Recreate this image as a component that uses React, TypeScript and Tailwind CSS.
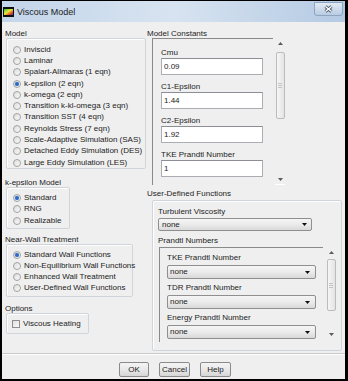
import type { ReactNode } from "react";

const modelOptions = [
  "Inviscid",
  "Laminar",
  "Spalart-Allmaras (1 eqn)",
  "k-epsilon (2 eqn)",
  "k-omega (2 eqn)",
  "Transition k-kl-omega (3 eqn)",
  "Transition SST (4 eqn)",
  "Reynolds Stress (7 eqn)",
  "Scale-Adaptive Simulation (SAS)",
  "Detached Eddy Simulation (DES)",
  "Large Eddy Simulation (LES)",
];

const kEpsOptions = ["Standard", "RNG", "Realizable"];

const wallOptions = [
  "Standard Wall Functions",
  "Non-Equilibrium Wall Functions",
  "Enhanced Wall Treatment",
  "User-Defined Wall Functions",
];

const constants = [
  { label: "Cmu", value: "0.09" },
  { label: "C1-Epsilon", value: "1.44" },
  { label: "C2-Epsilon", value: "1.92" },
  { label: "TKE Prandtl Number", value: "1" },
];

const prandtl = ["TKE Prandtl Number", "TDR Prandtl Number", "Energy Prandtl Number"];

function Radio({ label, checked, rowClass }: { label: string; checked?: boolean; rowClass: string }) {
  return (
    <div className={`flex items-center ${rowClass}`}>
      <span className="ml-[6px] flex h-[8px] w-[8px] shrink-0 items-center justify-center rounded-full border border-[#a3a3a3] bg-gradient-to-br from-[#dcdcdc] to-[#fbfbfb]">
        {checked ? <span className="h-[4px] w-[4px] rounded-full bg-[#2c6cc4] shadow-[0_0_1px_#7fb0ea]" /> : null}
      </span>
      <span className="ml-[3px] whitespace-nowrap leading-none">{label}</span>
    </div>
  );
}

function GroupBox({ className, children }: { className: string; children: ReactNode }) {
  return (
    <div className={`rounded-[2px] border border-[#cfd5da] shadow-[inset_1px_1px_0_#ffffff] ${className}`}>
      {children}
    </div>
  );
}

function ScrollBar({ thumbClass }: { thumbClass: string }) {
  return (
    <div className="flex w-[10px] flex-col items-center">
      <div className="flex h-[11px] w-full items-center justify-center">
        <svg width="5" height="3" viewBox="0 0 5 3">
          <path d="M0 3L2.5 0L5 3z" fill="#5a5a5a" />
        </svg>
      </div>
      <div
        className={`flex w-[9px] flex-col items-center justify-center gap-[1px] rounded-[2px] border border-[#bcbcbc] bg-gradient-to-r from-[#f6f6f6] to-[#e4e4e4] ${thumbClass}`}
      >
        <span className="h-px w-[4px] bg-[#c4c4c4]" />
        <span className="h-px w-[4px] bg-[#c4c4c4]" />
        <span className="h-px w-[4px] bg-[#c4c4c4]" />
      </div>
      <div className="flex-1" />
      <div className="flex h-[10px] w-full items-center justify-center">
        <svg width="5" height="3" viewBox="0 0 5 3">
          <path d="M0 0L5 0L2.5 3z" fill="#5a5a5a" />
        </svg>
      </div>
    </div>
  );
}

function Combo({ className }: { className: string }) {
  return (
    <div
      className={`flex items-center justify-between rounded-[2px] border border-[#8f8f8f] bg-gradient-to-b from-[#f5f5f5] via-[#ebebeb] to-[#d9d9d9] ${className}`}
    >
      <span className="leading-none">none</span>
      <svg width="5" height="3" viewBox="0 0 5 3">
        <path d="M0 0L5 0L2.5 3z" fill="#111111" />
      </svg>
    </div>
  );
}

function Button({ label, width }: { label: string; width: string }) {
  return (
    <div
      className={`flex h-[15px] items-center justify-center rounded-[2px] border border-[#8a8a8a] bg-gradient-to-b from-[#f4f4f4] via-[#e9e9e9] to-[#d6d6d6] leading-none ${width}`}
    >
      {label}
    </div>
  );
}

export default function App() {
  return (
    <div className="h-[381px] w-[348px] overflow-hidden bg-black pb-[2px] pl-[2px] pr-[3px] pt-[1px] font-['Liberation_Sans',Arial,sans-serif] text-[8px] text-[#1c1c1c]">
      <div className="flex h-full flex-col bg-[#efefef]">
        {/* title bar */}
        <div className="flex h-[21px] items-start justify-between bg-gradient-to-r from-[#c3d5ea] via-[#d7e3f0] to-[#b4cae3]">
          <div className="flex h-full items-center">
            <svg width="11" height="10" viewBox="0 0 11 10" className="ml-[1px] mt-[1px]">
              <defs>
                <linearGradient id="ico" x1="0" y1="0" x2="1" y2="1">
                  <stop offset="0" stopColor="#2fbf3a" />
                  <stop offset="0.45" stopColor="#e8e83a" />
                  <stop offset="0.75" stopColor="#e84a22" />
                  <stop offset="1" stopColor="#2b3fbf" />
                </linearGradient>
              </defs>
              <rect x="0" y="0" width="11" height="10" fill="#101010" />
              <rect x="1" y="2" width="9" height="6" fill="url(#ico)" />
            </svg>
            <span className="ml-[3px] mt-[1px] text-[9px] leading-none text-[#1a1a1a]">Viscous Model</span>
          </div>
          <div className="mr-[2px] mt-[1px] flex h-[14px] w-[29px] items-center justify-center rounded-b-[3px] border border-[#8ea4bf] bg-gradient-to-b from-[#e2ebf5] to-[#b8cce2]">
            <svg width="9" height="8" viewBox="0 0 9 8">
              <path d="M1.5 1.5L7.5 6.5M7.5 1.5L1.5 6.5" stroke="#4a5566" strokeWidth="3" />
              <path d="M1.5 1.5L7.5 6.5M7.5 1.5L1.5 6.5" stroke="#ffffff" strokeWidth="1.4" />
            </svg>
          </div>
        </div>

        {/* body */}
        <div className="flex h-[331px]">
          {/* left column */}
          <div className="w-[145px] pl-[3px] pt-[8px]">
            <div className="leading-[8px]">Model</div>
            <GroupBox className="ml-[1px] w-[140px] pt-[5px]">
              {modelOptions.map((m) => (
                <Radio key={m} label={m} checked={m === "k-epsilon (2 eqn)"} rowClass="h-[11.3px]" />
              ))}
            </GroupBox>

            <div className="mt-[10px] leading-[8px]">k-epsilon Model</div>
            <GroupBox className="ml-[1px] w-[64px] pb-[2px] pt-[4px]">
              {kEpsOptions.map((m) => (
                <Radio key={m} label={m} checked={m === "Standard"} rowClass="h-[11.3px]" />
              ))}
            </GroupBox>

            <div className="mt-[7px] leading-[8px]">Near-Wall Treatment</div>
            <GroupBox className="ml-[1px] w-[127px] pb-[3px] pt-[4px]">
              {wallOptions.map((m) => (
                <Radio key={m} label={m} checked={m === "Standard Wall Functions"} rowClass="h-[11px]" />
              ))}
            </GroupBox>

            <div className="mt-[8px] leading-[8px]">Options</div>
            <GroupBox className="ml-[1px] w-[83px] py-[4.5px]">
              <div className="flex h-[10px] items-center">
                <span className="ml-[5px] h-[8px] w-[8px] border border-[#8f8f8f] bg-gradient-to-br from-[#dedede] to-[#fbfbfb]" />
                <span className="ml-[3px] leading-none">Viscous Heating</span>
              </div>
            </GroupBox>
          </div>

          {/* right column */}
          <div className="flex-1 pt-[8px]">
            <div className="leading-[8px]">Model Constants</div>
            <div className="ml-[5px] flex h-[147px] w-[136px]">
              <div className="w-[121px] overflow-hidden border-l border-t border-[#8a8a8a] pl-[8px] pt-[9px]">
                {constants.map((c) => (
                  <div key={c.label} className="mb-[7px]">
                    <div className="leading-[10px]">{c.label}</div>
                    <div className="flex h-[17px] w-[102px] items-center border border-[#abadb3] border-t-[#8b8e94] bg-white pl-[2px] leading-none">
                      {c.value}
                    </div>
                  </div>
                ))}
              </div>
              <div className="ml-[2px] flex border-b border-[#ffffff]">
                <ScrollBar thumbClass="mt-[3px] h-[67px]" />
              </div>
            </div>

            <div className="mt-[4px] leading-[10px]">User-Defined Functions</div>
            <GroupBox className="ml-[5px] mt-[1px] h-[151px] w-[190px] pt-[6px]">
              <div className="pl-[5px] leading-[10px]">Turbulent Viscosity</div>
              <Combo className="ml-[5px] mt-[1px] h-[13px] w-[154px] pl-[3px] pr-[4px]" />
              <div className="mt-[5px] pl-[5px] leading-[10px]">Prandtl Numbers</div>
              <div className="ml-[6px] mt-[1px] flex h-[95px] w-[181px]">
                <div className="w-[164px] overflow-hidden border-l border-t border-[#8a8a8a] pl-[7px] pt-[5px]">
                  {prandtl.map((p) => (
                    <div key={p} className="mb-[4px]">
                      <div className="leading-[10px]">{p}</div>
                      <Combo className="mt-[2px] h-[14px] w-[149px] pl-[2px] pr-[5px]" />
                    </div>
                  ))}
                </div>
                <div className="ml-[3px] flex pb-[3px]">
                  <ScrollBar thumbClass="mt-[1px] h-[52px]" />
                </div>
              </div>
            </GroupBox>
          </div>
        </div>

        {/* footer */}
        <div className="flex flex-1 justify-center gap-[10px] border-t border-[#c8c8c8] pl-[3px] pt-[8px] shadow-[inset_0_1px_0_#ffffff]">
          <Button label="OK" width="w-[30px]" />
          <Button label="Cancel" width="w-[31px]" />
          <Button label="Help" width="w-[31px]" />
        </div>
      </div>
    </div>
  );
}
